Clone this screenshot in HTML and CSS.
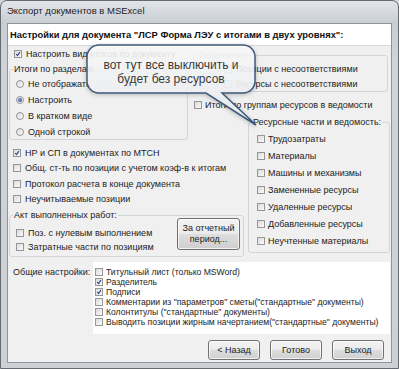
FILE: index.html
```html
<!DOCTYPE html>
<html lang="ru">
<head>
  <meta charset="UTF-8">
  <title>Экспорт документов в MSExcel</title>
  <link rel="stylesheet" href="styles.css">
</head>
<body>
  <div class="window">
    <div class="titlebar">Экспорт документов в MSExcel</div>
    <div class="client">
      <div class="header">Настройки для документа "ЛСР Форма ЛЭУ с итогами в двух уровнях":</div>

      <div class="main">
        <label class="opt nav"><span class="cb on"><svg viewBox="0 0 8 8"><path d="M1.6 4 L3.3 6 L6.6 1.6"/></svg></span>Настроить вид итогов по документу</label>

        <fieldset class="group top-group">
          <legend>Выделение</legend>
          <label class="opt"><span class="cb"></span>Позиции с несоответствиями</label>
          <label class="opt"><span class="cb"></span>Ресурсы с несоответствиями</label>
        </fieldset>

        <fieldset class="group sections">
          <legend>Итоги по разделам</legend>
          <label class="opt"><span class="rb"></span>Не отображать</label>
          <label class="opt"><span class="rb on"></span>Настроить</label>
          <label class="opt"><span class="rb"></span>В кратком виде</label>
          <label class="opt"><span class="rb"></span>Одной строкой</label>
        </fieldset>

        <label class="opt itg"><span class="cb"></span>Итоги по группам ресурсов в ведомости</label>

        <fieldset class="group res">
          <legend>Ресурсные части и ведомость:</legend>
          <label class="opt"><span class="cb"></span>Трудозатраты</label>
          <label class="opt"><span class="cb"></span>Материалы</label>
          <label class="opt"><span class="cb"></span>Машины и механизмы</label>
          <label class="opt"><span class="cb"></span>Замененные ресурсы</label>
          <label class="opt"><span class="cb"></span>Удаленные ресурсы</label>
          <label class="opt"><span class="cb"></span>Добавленные ресурсы</label>
          <label class="opt"><span class="cb"></span>Неучтенные материалы</label>
        </fieldset>

        <div class="checks">
          <label class="opt"><span class="cb on"><svg viewBox="0 0 8 8"><path d="M1.6 4 L3.3 6 L6.6 1.6"/></svg></span>НР и СП в документах по МТСН</label>
          <label class="opt"><span class="cb"></span>Общ. ст-ть по позиции с учетом коэф-в к итогам</label>
          <label class="opt"><span class="cb"></span>Протокол расчета в конце документа</label>
          <label class="opt"><span class="cb"></span>Неучитываемые позиции</label>
        </div>

        <fieldset class="group akt">
          <legend>Акт выполненных работ:</legend>
          <div class="akt-body">
            <div class="akt-checks">
              <label class="opt"><span class="cb"></span>Поз. с нулевым выполнением</label>
              <label class="opt"><span class="cb"></span>Затратные части по позициям</label>
            </div>
            <button class="btn period">За отчетный<br>период...</button>
          </div>
        </fieldset>
      </div>

      <div class="common">
        <div class="common-label">Общие настройки:</div>
        <div class="list">
          <label class="opt"><span class="cb"></span>Титульный лист (только MSWord)</label>
          <label class="opt"><span class="cb on"><svg viewBox="0 0 8 8"><path d="M1.6 4 L3.3 6 L6.6 1.6"/></svg></span>Разделитель</label>
          <label class="opt"><span class="cb on"><svg viewBox="0 0 8 8"><path d="M1.6 4 L3.3 6 L6.6 1.6"/></svg></span>Подписи</label>
          <label class="opt"><span class="cb"></span>Комментарии из "параметров" сметы("стандартные" документы)</label>
          <label class="opt"><span class="cb"></span>Колонтитулы ("стандартные" документы)</label>
          <label class="opt"><span class="cb"></span>Выводить позиции жирным начертанием("стандартные" документы)</label>
        </div>
      </div>

      <div class="buttons">
        <button class="btn">&lt; Назад</button>
        <button class="btn">Готово</button>
        <button class="btn">Выход</button>
      </div>
    </div>
  </div>

  <!-- note balloon drawn over the dialog -->
  <div class="callout">
    <svg class="callout-shape" viewBox="0 0 185 90" width="185" height="90">
      <defs>
        <linearGradient id="balloon" x1="0" y1="0" x2="0" y2="1">
          <stop offset="0" stop-color="#ffffff" stop-opacity="0.86"/>
          <stop offset="1" stop-color="#e6eaef" stop-opacity="0.97"/>
        </linearGradient>
      </defs>
      <path d="M19 5 H163 A12 12 0 0 1 175 17 V41 A12 12 0 0 1 163 53 H142 L176 85 L126 53 H19 A12 12 0 0 1 7 41 V17 A12 12 0 0 1 19 5 Z"/>
    </svg>
    <div class="callout-text">вот тут все выключить и<br>будет без ресурсов</div>
  </div>
</body>
</html>
```

FILE: styles.css
```css
body {
  margin: 0;
  width: 399px;
  height: 369px;
  overflow: hidden;
  position: relative;
  font-family: "Liberation Sans", Arial, sans-serif;
  font-size: 9px;
  color: #1c1c1c;
  background: #d2d6db;
}
.window {
  box-sizing: border-box;
  width: 399px;
  height: 369px;
  display: flex;
  flex-direction: column;
  border: 1px solid #666b72;
  border-radius: 7px 7px 0 0;
  background: linear-gradient(#e2e5e9, #c9ced4 22px, #d0d4d9 60px, #cdd1d6);
}
.titlebar {
  height: 22px;
  line-height: 19px;
  padding-left: 6px;
  font-size: 9.5px;
  color: #222;
}
.client {
  flex: 1;
  display: flex;
  flex-direction: column;
  margin: 0 6px 5px 6px;
  border: 1px solid #8e949b;
  background: #f0f0f0;
}
.header {
  height: 21px;
  line-height: 21px;
  padding-left: 2px;
  background: #fff;
  border-bottom: 1px solid #d9d9d9;
  font-weight: bold;
  font-size: 9.4px;
  color: #111;
  white-space: nowrap;
}

/* option rows */
.opt {
  display: flex;
  align-items: center;
  gap: 4px;
  white-space: nowrap;
}
.cb, .rb {
  box-sizing: border-box;
  flex: none;
  width: 8px;
  height: 8px;
  border: 1px solid #969696;
  background: linear-gradient(135deg, #dadada, #fbfbfb);
}
.cb svg {
  display: block;
  width: 6px;
  height: 6px;
}
.cb svg path {
  fill: none;
  stroke: #2c3f8f;
  stroke-width: 1.5;
}
.rb {
  border-radius: 50%;
  display: flex;
  align-items: center;
  justify-content: center;
}
.rb.on::after {
  content: "";
  width: 4px;
  height: 4px;
  border-radius: 50%;
  background: radial-gradient(circle at 35% 35%, #7f9ad0, #1f3c86);
}

/* main grid */
.main {
  display: grid;
  grid-template-columns: 185px 53px 1fr;
  grid-template-rows: 15px 35px 17px 31px 62px 54px;
  grid-template-areas:
    "nav top top"
    "sec top top"
    "sec itg itg"
    "sec .   res"
    "chk chk res"
    "akt akt res";
}
.group {
  margin: 0;
  min-width: 0;
  border: 1px solid #d0d6dc;
  border-radius: 3px;
}
.group legend {
  padding: 0 1px;
  line-height: 11px;
}
.nav {
  grid-area: nav;
  margin-left: 6px;
}
.top-group {
  grid-area: top;
  margin: 4px 3px 4px 0;
  padding: 0 0 0 4px;
}
.top-group legend {
  color: #9a9a9a;
}
.top-group .opt {
  height: 15px;
  margin-left: 26px;
}
.sections {
  grid-area: sec;
  margin: 3px 5px 4px 1px;
  padding: 1px 0 0 6px;
}
.sections legend {
  margin-left: -3px;
}
.sections .opt {
  height: 16px;
}
.itg {
  grid-area: itg;
  margin-left: 1px;
  gap: 3px;
}
.res {
  grid-area: res;
  margin: 4px 1px 7px 2px;
  padding: 2px 0 0 8px;
}
.res legend {
  margin-left: -5px;
}
.res .opt {
  height: 17px;
  gap: 3px;
}
.checks {
  grid-area: chk;
  padding: 1px 0 0 5px;
}
.checks .opt {
  height: 15.5px;
}
.akt {
  grid-area: akt;
  margin: 4px 2px 3px 1px;
  padding: 0 3px 0 6px;
}
.akt legend {
  margin-left: -3px;
}
.akt-body {
  display: flex;
  justify-content: space-between;
}
.akt-checks {
  margin-top: 5px;
}
.akt-checks .opt {
  height: 14px;
}

/* buttons */
.btn {
  box-sizing: border-box;
  width: 52px;
  height: 20px;
  padding: 0;
  border: 1px solid #707070;
  border-radius: 3px;
  background: linear-gradient(#f3f3f3, #ebebeb 48%, #dddddd 52%, #cfcfcf);
  box-shadow: inset 0 0 0 1px rgba(255, 255, 255, 0.7);
  font-family: "Liberation Sans", Arial, sans-serif;
  font-size: 9px;
  color: #1c1c1c;
}
.period {
  width: 63px;
  height: 32px;
  margin-top: -3px;
  line-height: 11px;
}

/* general settings */
.common {
  display: flex;
  margin-top: 2px;
}
.common-label {
  width: 80px;
  padding: 5px 0 0 5px;
  line-height: 10px;
}
.list {
  flex: 1;
  height: 72px;
  box-sizing: border-box;
  padding: 5px 0 0 2px;
  margin-right: 1px;
  background: #fff;
  font-size: 8.6px;
}
.list .opt {
  height: 10px;
  gap: 3px;
}
.buttons {
  display: flex;
  justify-content: flex-end;
  gap: 10px;
  margin-top: 6px;
  padding-right: 7px;
}

/* balloon */
.callout {
  position: absolute;
  left: 80px;
  top: 40px;
  width: 185px;
  height: 90px;
}
.callout-shape {
  display: block;
  filter: drop-shadow(0 1px 2px rgba(0, 0, 0, 0.25));
}
.callout-shape path {
  fill: url(#balloon);
  stroke: #40597a;
  stroke-width: 1.5;
}
.callout-text {
  position: absolute;
  left: 7px;
  top: 18px;
  width: 168px;
  text-align: center;
  font-size: 12px;
  line-height: 14px;
  color: #3a3a3a;
}
```
